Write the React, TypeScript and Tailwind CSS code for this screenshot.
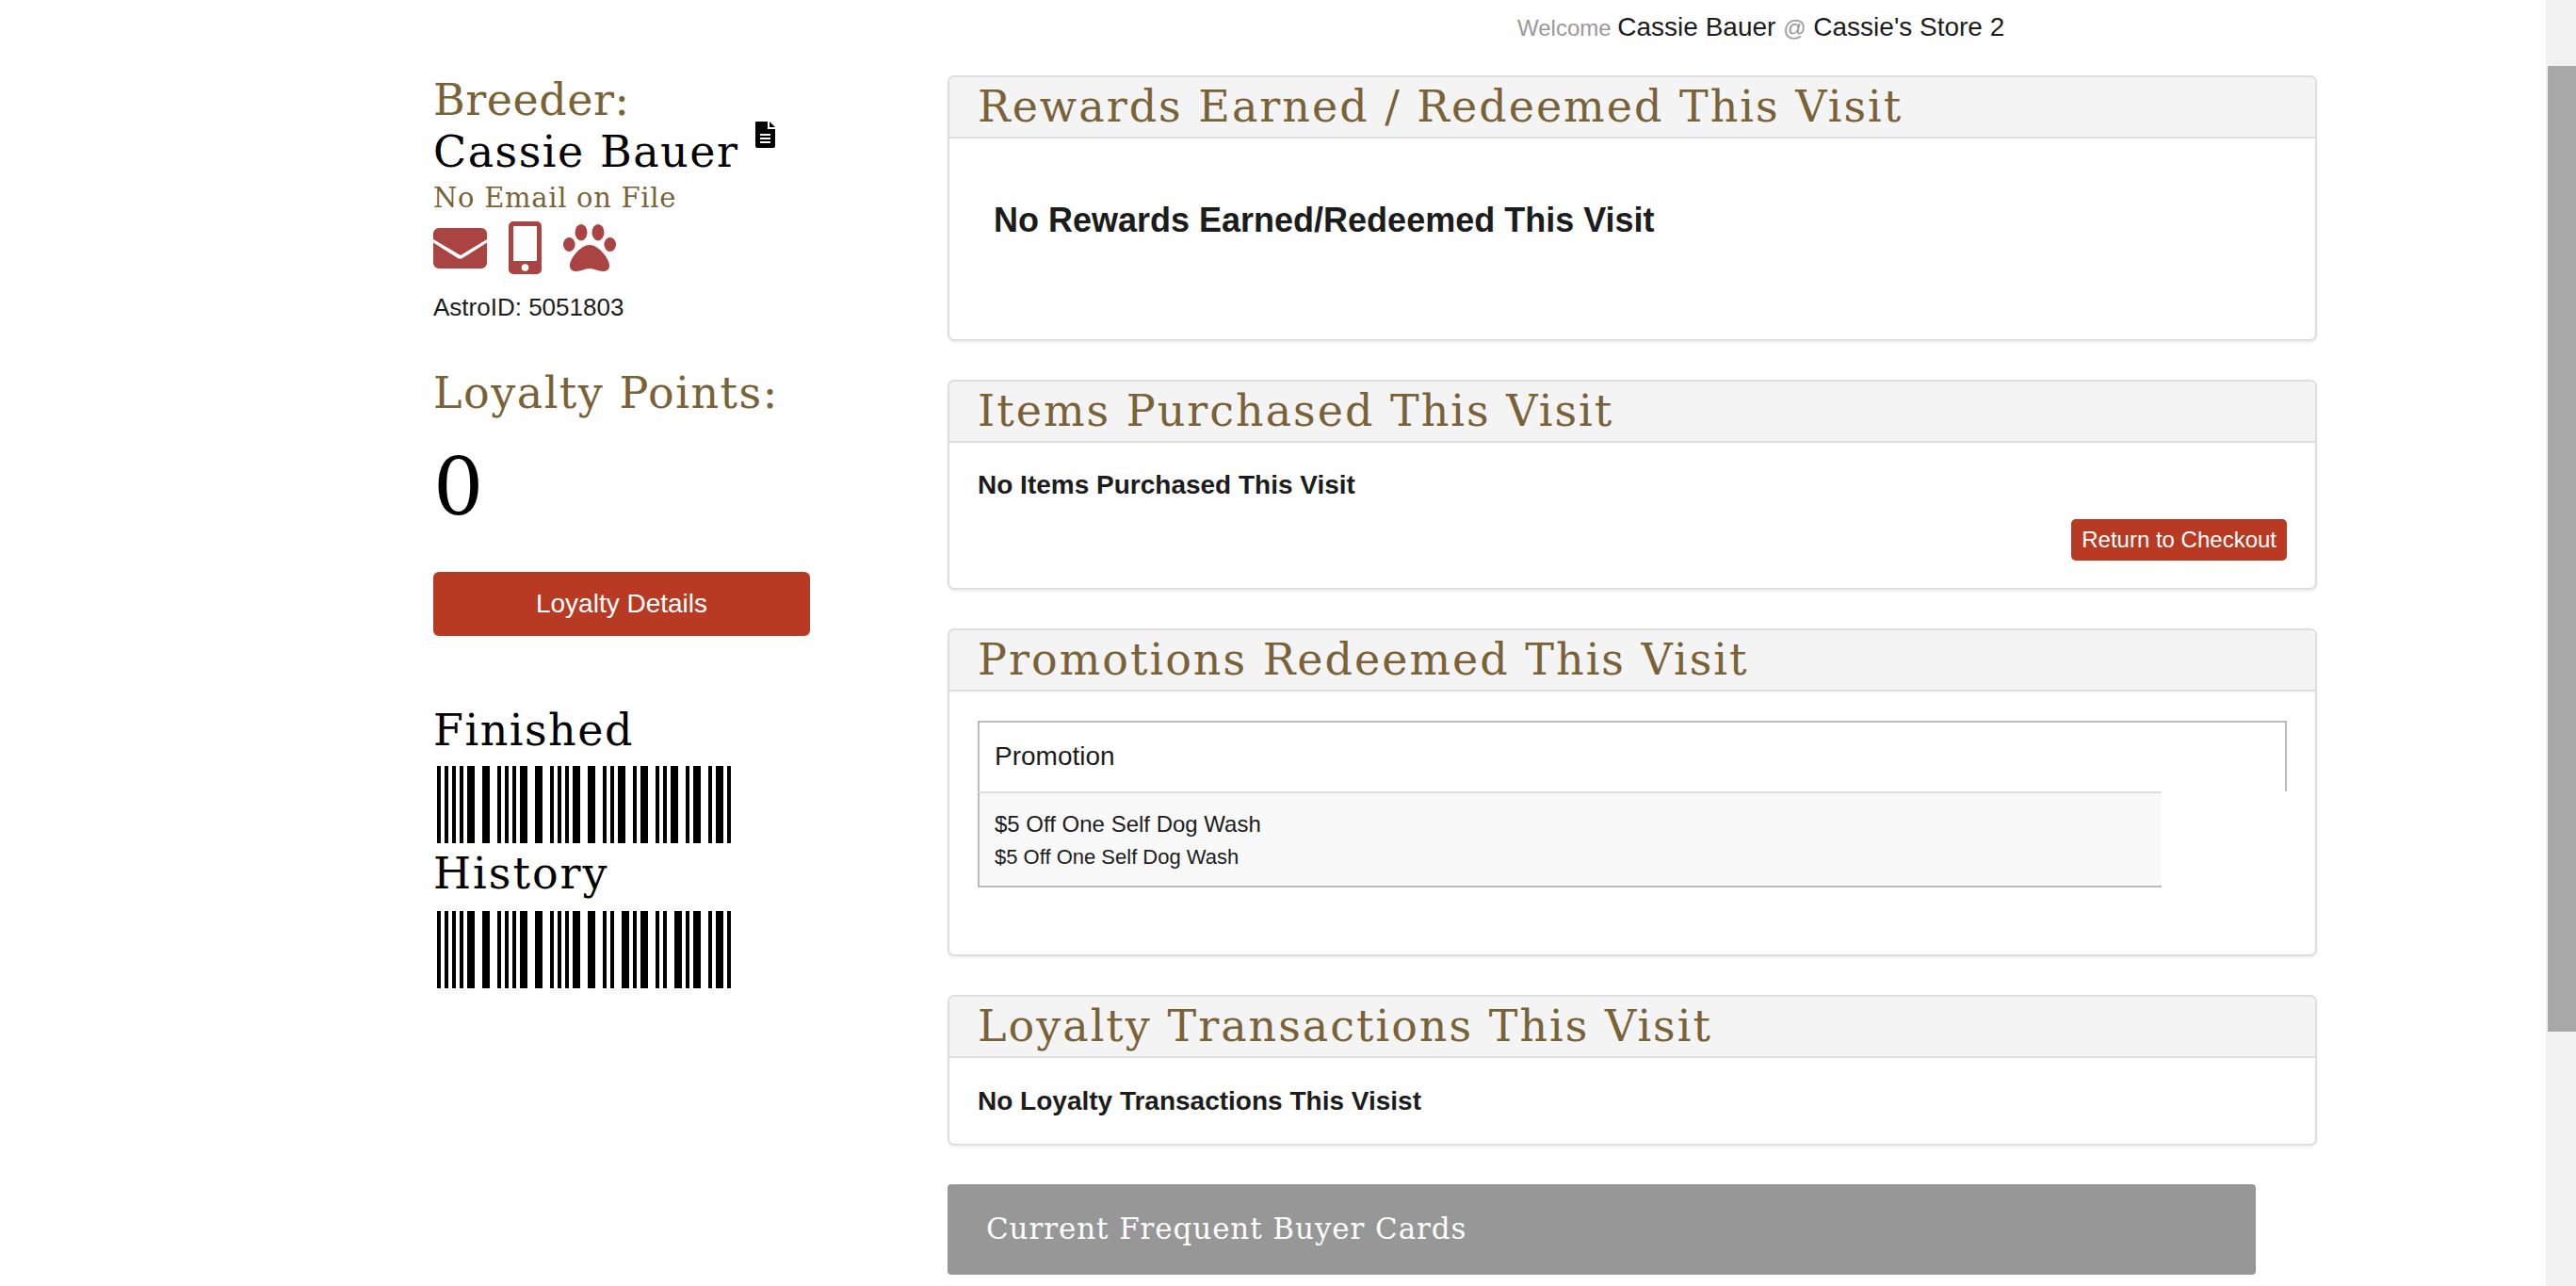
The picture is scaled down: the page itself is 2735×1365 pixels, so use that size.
const slab = "font-['DejaVu_Serif',serif]";

// bars of the two barcodes: [start, width] in px
const finishedBars = [[0,4],[8,4],[16,4],[24,4],[32,8],[48,8],[64,4],[72,4],[80,4],[88,8],[104,8],[120,4],[128,4],[136,4],[144,8],[160,8],[176,4],[184,4],[192,8],[208,4],[216,8],[232,4],[240,4],[248,8],[264,4],[272,8],[288,4],[296,8],[308,4]];
const historyBars = [[0,4],[8,4],[16,4],[24,4],[32,8],[48,8],[64,4],[72,4],[80,4],[88,8],[104,8],[120,4],[128,4],[136,4],[144,8],[160,8],[176,4],[184,4],[196,8],[208,4],[216,8],[232,4],[240,4],[252,8],[264,4],[272,8],[288,4],[296,8],[308,4]];

function Barcode({ bars }: { bars: number[][] }) {
  return (
    <svg width="312" height="82" viewBox="0 0 312 82" className="block ml-[4px]">
      {bars.map(([x, w], i) => (
        <rect key={i} x={x} y="0" width={w} height="82" fill="#000" />
      ))}
    </svg>
  );
}

function Panel({ title, children }: { title: string; children: React.ReactNode }) {
  return (
    <section className="rounded-[7px] border-2 border-[#dedede] bg-white shadow-[0_2px_3px_rgba(0,0,0,0.06)]">
      <div className={`h-[65px] rounded-t-[5px] border-b-2 border-[#dedede] bg-[#f4f4f4] pl-[30px] text-[46px] leading-[62px] tracking-[2px] text-[#7a6238] whitespace-nowrap ${slab}`}>
        {title}
      </div>
      {children}
    </section>
  );
}

export default function App() {
  return (
    <div className="flex h-[1365px] overflow-hidden bg-white font-['Liberation_Sans',sans-serif] text-[#1c1c1c]">
      <main className="flex-1 min-w-0">
        <div className="h-[80px] pl-[1611px] pt-[13px] text-[28px] leading-[32px] whitespace-nowrap">
          <span className="text-[24px] text-[#999]">Welcome </span>Cassie Bauer <span className="text-[24px] text-[#999]">@</span> Cassie's Store 2
        </div>

        <div className="flex pl-[460px]">
          {/* LEFT COLUMN */}
          <aside className="w-[546px] shrink-0">
            <div className={`mt-[2px] text-[46px] leading-[48px] tracking-[0.5px] text-[#7a6238] ${slab}`}>Breeder:</div>
            <div className="mt-[8px] flex items-start">
              <div className={`text-[46px] leading-[46px] tracking-[1.5px] text-black whitespace-nowrap ${slab}`}>Cassie Bauer</div>
              <svg width="21" height="28" viewBox="0 0 21 28" className="ml-[18px] -mt-[9px]">
                <path d="M1 0h12v8h8v18a2 2 0 0 1-2 2H2a2 2 0 0 1-2-2V1a1 1 0 0 1 1-1z" fill="#000" />
                <path d="M15 0l6 6h-6z" fill="#000" />
                <path d="M5 13h11v2H5zM5 17h11v2H5zM5 21h11v2H5z" fill="#fff" />
              </svg>
            </div>
            <div className={`mt-[8px] text-[29px] leading-[36px] tracking-[0.7px] text-[#7a6238] whitespace-nowrap ${slab}`}>No Email on File</div>
            <div className="mt-[7px] flex items-center h-[56px]">
              <svg width="57" height="43" viewBox="0 0 57 43">
                <path d="M6 0h45a6 6 0 0 1 6 6v6L29 29 0 12V6a6 6 0 0 1 6-6z" fill="#a94442" />
                <path d="M0 15.500l26 16.500a5 5 0 0 0 5 0l26-16.500v21.500a6 6 0 0 1-6 6H6a6 6 0 0 1-6-6z" fill="#a94442" />
              </svg>
              <svg width="35" height="56" viewBox="0 0 35 56" className="ml-[23px]">
                <path fillRule="evenodd" d="M5 0h25a5 5 0 0 1 5 5v46a5 5 0 0 1-5 5H5a5 5 0 0 1-5-5V5a5 5 0 0 1 5-5zM5 5v37h25V5zM17.500 45.200a3.800 3.800 0 1 0 0 7.600a3.800 3.800 0 0 0 0-7.600z" fill="#a94442" />
              </svg>
              <svg width="56" height="50" viewBox="0 0 56 50" className="ml-[23px]">
                <g fill="#a94442">
                  <ellipse cx="6.300" cy="21.500" rx="6.300" ry="7.500" />
                  <ellipse cx="19" cy="8.700" rx="6.500" ry="8.700" />
                  <ellipse cx="37" cy="8.700" rx="6.500" ry="8.700" />
                  <ellipse cx="49.700" cy="21.500" rx="6.300" ry="7.500" />
                  <path d="M28 22c9 0 21 14 21 22c0 4-3 6-7 6c-5 0-9-3-14-3s-9 3-14 3c-4 0-7-2-7-6c0-8 12-22 21-22z" />
                </g>
              </svg>
            </div>
            <div className="mt-[21px] text-[26px] leading-[28px]">AstroID: 5051803</div>

            <div className={`mt-[51px] text-[46px] leading-[52px] tracking-[1.500px] text-[#7a6238] whitespace-nowrap ${slab}`}>Loyalty Points:</div>
            <div className={`mt-[24px] text-[84px] leading-[100px] text-black ${slab}`}>0</div>
            <button className="mt-[40px] block h-[68px] w-[400px] rounded-[6px] bg-[#b93a22] text-[28px] text-white">Loyalty Details</button>

            <div className={`mt-[75px] text-[46px] leading-[50px] tracking-[1.500px] text-black ${slab}`}>Finished</div>
            <div className="mt-[13px]"><Barcode bars={finishedBars} /></div>
            <div className={`mt-[2px] text-[46px] leading-[60px] tracking-[2px] text-black ${slab}`}>History</div>
            <div className="mt-[10px]"><Barcode bars={historyBars} /></div>
          </aside>

          {/* RIGHT COLUMN */}
          <div className="w-[1454px] shrink-0 flex flex-col gap-[41px]">
            <Panel title="Rewards Earned / Redeemed This Visit">
              <div className="h-[213px] pl-[47px] pt-[67px] text-[36px] leading-[40px] font-bold">No Rewards Earned/Redeemed This Visit</div>
            </Panel>

            <Panel title="Items Purchased This Visit">
              <div className="h-[154px] px-[30px] pt-[29px]">
                <div className="text-[28px] leading-[32px] font-bold">No Items Purchased This Visit</div>
                <div className="mt-[20px] flex justify-end">
                  <button className="h-[44px] rounded-[5px] bg-[#b93a22] px-[11px] text-[24px] text-white">Return to Checkout</button>
                </div>
              </div>
            </Panel>

            <Panel title="Promotions Redeemed This Visit">
              <div className="h-[279px] px-[30px] pt-[31px]">
                <div className="h-[75px] border-2 border-b-0 border-[#bbb] pl-[16px] text-[28px] leading-[71px]">Promotion</div>
                <div className="h-[102px] w-[1257px] border-b-2 border-l-2 border-t-2 border-b-[#bbb] border-l-[#bbb] border-t-[#ddd] bg-[#f9f9f9] pl-[16px] pt-[18px]">
                  <div className="text-[24px] leading-[30px]">$5 Off One Self Dog Wash</div>
                  <div className="mt-[6px] text-[22px] leading-[28px]">$5 Off One Self Dog Wash</div>
                </div>
              </div>
            </Panel>

            <Panel title="Loyalty Transactions This Visit">
              <div className="h-[91px] px-[30px] pt-[30px] text-[28px] leading-[32px] font-bold">No Loyalty Transactions This Visist</div>
            </Panel>

            <div className={`h-[96px] w-[1389px] rounded-[4px] bg-[#979797] pl-[41px] text-[31px] leading-[94px] tracking-[0.900px] text-white ${slab}`}>
              Current Frequent Buyer Cards
            </div>
          </div>
        </div>
      </main>

      {/* page scrollbar */}
      <div className="w-[32px] shrink-0 bg-[#f1f1f1] pl-[2px] pt-[70px]">
        <div className="h-[1025px] bg-[#a8a8a8]" />
      </div>
    </div>
  );
}
